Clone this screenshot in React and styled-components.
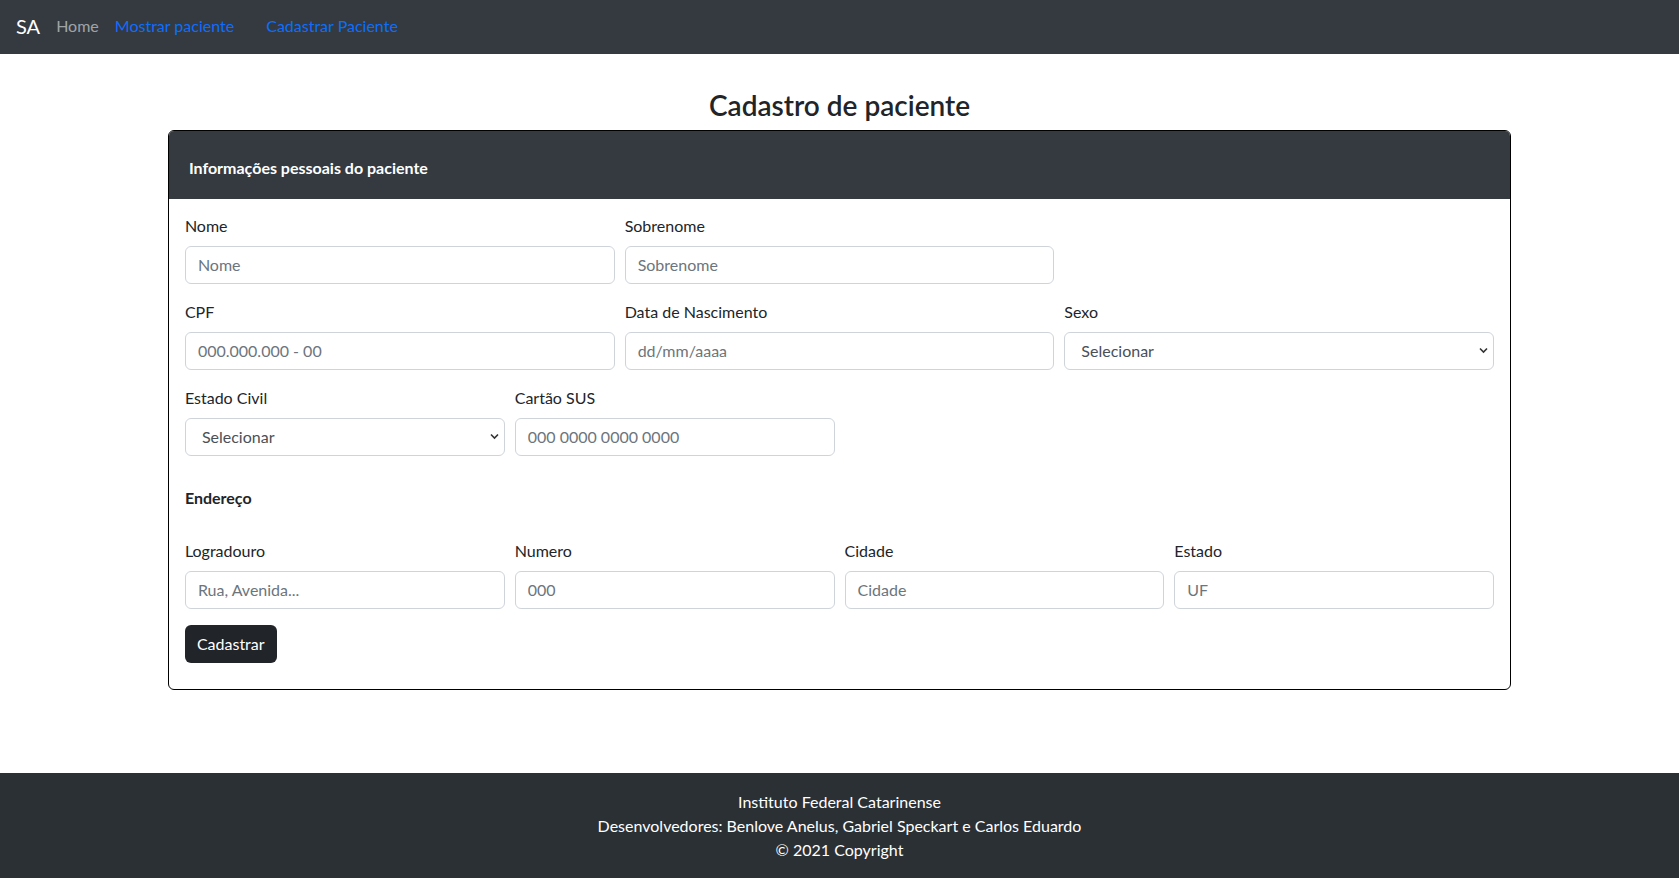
import React from 'react';
import styled, { createGlobalStyle } from 'styled-components';

const GlobalStyle = createGlobalStyle`
  * {
    box-sizing: border-box;
  }
  body {
    margin: 0;
    font-family: Lato, "Noto Sans", sans-serif;
    font-size: 16px;
    line-height: 1.5;
    color: #212529;
    background: #ffffff;
  }
`;

const Page = styled.div`
  min-height: 100vh;
  display: flex;
  flex-direction: column;
`;

const Navbar = styled.nav`
  display: flex;
  align-items: center;
  height: 54px;
  padding: 0 16px 2px;
  background: #343a40;
`;

const Brand = styled.span`
  font-size: 20px;
  color: #ffffff;
  margin-right: 16px;
`;

const NavLink = styled.a`
  font-size: 16px;
  text-decoration: none;
  color: ${(p) => (p.$muted ? 'rgba(255, 255, 255, 0.55)' : '#0d6efd')};
  margin-right: ${(p) => p.$gap || 16}px;
`;

const Main = styled.main`
  width: 80%;
  margin: 0 auto;
  padding-top: 35px;
  padding-bottom: 40px;
`;

const Title = styled.h3`
  margin: 0 0 7px;
  text-align: center;
  font-size: 28px;
  font-weight: 600;
  line-height: 1.2;
`;

const Card = styled.div`
  border: 1px solid #000000;
  border-radius: 6px;
  overflow: hidden;
`;

const CardHeader = styled.div`
  display: flex;
  align-items: center;
  height: 68px;
  padding: 6px 20px 0;
  background: #343a40;
  color: #ffffff;
  font-weight: 700;
  font-size: 16px;
`;

const CardBody = styled.form`
  padding: 15px 16px 26px;
`;

const Row = styled.div`
  display: grid;
  grid-template-columns: repeat(${(p) => p.$cols}, 1fr);
  column-gap: 10px;
  margin-bottom: 16px;
`;

const Field = styled.div`
  display: flex;
  flex-direction: column;
`;

const Label = styled.label`
  font-size: 16px;
  line-height: 24px;
  margin-bottom: 8px;
`;

const Input = styled.input`
  height: 38px;
  width: 100%;
  padding: 6px 12px;
  font-family: inherit;
  font-size: 16px;
  color: #212529;
  border: 1px solid #ced4da;
  border-radius: 6px;
  outline: none;
  &::placeholder {
    color: #6c757d;
  }
`;

const SelectWrap = styled.div`
  position: relative;
`;

const Select = styled.select`
  appearance: none;
  height: 38px;
  width: 100%;
  padding: 6px 28px 6px 16px;
  font-family: inherit;
  font-size: 16px;
  color: #495057;
  background: #ffffff;
  border: 1px solid #ced4da;
  border-radius: 6px;
  outline: none;
`;

const Chevron = styled.svg`
  position: absolute;
  right: 6px;
  top: 15px;
  width: 9px;
  height: 7px;
  pointer-events: none;
`;

const Section = styled.h6`
  margin: 30px 0 29px;
  font-size: 16px;
  font-weight: 700;
  line-height: 24px;
`;

const Button = styled.button`
  height: 38px;
  padding: 0 12px;
  font-family: inherit;
  font-size: 16px;
  color: #ffffff;
  background: #212529;
  border: none;
  border-radius: 6px;
`;

const Footer = styled.footer`
  margin-top: auto;
  padding: 17px 0 16px;
  background: #2b3035;
  color: #ffffff;
  text-align: center;
  font-size: 16px;
  line-height: 24px;
`;

function TextField({ label, placeholder }) {
  return (
    <Field>
      <Label>{label}</Label>
      <Input placeholder={placeholder} />
    </Field>
  );
}

function SelectField({ label }) {
  return (
    <Field>
      <Label>{label}</Label>
      <SelectWrap>
        <Select defaultValue="">
          <option value="">Selecionar</option>
        </Select>
        <Chevron viewBox="0 0 9 7">
          <path d="M1 1.5 L4.5 5 L8 1.5" fill="none" stroke="#333" strokeWidth="1.6" />
        </Chevron>
      </SelectWrap>
    </Field>
  );
}

export default function App() {
  return (
    <Page>
      <GlobalStyle />
      <Navbar>
        <Brand>SA</Brand>
        <NavLink $muted>Home</NavLink>
        <NavLink $gap={32}>Mostrar paciente</NavLink>
        <NavLink>Cadastrar Paciente</NavLink>
      </Navbar>
      <Main>
        <Title>Cadastro de paciente</Title>
        <Card>
          <CardHeader>Informações pessoais do paciente</CardHeader>
          <CardBody>
            <Row $cols={3}>
              <TextField label="Nome" placeholder="Nome" />
              <TextField label="Sobrenome" placeholder="Sobrenome" />
            </Row>
            <Row $cols={3}>
              <TextField label="CPF" placeholder="000.000.000 - 00" />
              <TextField label="Data de Nascimento" placeholder="dd/mm/aaaa" />
              <SelectField label="Sexo" />
            </Row>
            <Row $cols={4}>
              <SelectField label="Estado Civil" />
              <TextField label="Cartão SUS" placeholder="000 0000 0000 0000" />
            </Row>
            <Section>Endereço</Section>
            <Row $cols={4}>
              <TextField label="Logradouro" placeholder="Rua, Avenida..." />
              <TextField label="Numero" placeholder="000" />
              <TextField label="Cidade" placeholder="Cidade" />
              <TextField label="Estado" placeholder="UF" />
            </Row>
            <Button type="button">Cadastrar</Button>
          </CardBody>
        </Card>
      </Main>
      <Footer>
        <div>Instituto Federal Catarinense</div>
        <div>Desenvolvedores: Benlove Anelus, Gabriel Speckart e Carlos Eduardo</div>
        <div>© 2021 Copyright</div>
      </Footer>
    </Page>
  );
}
